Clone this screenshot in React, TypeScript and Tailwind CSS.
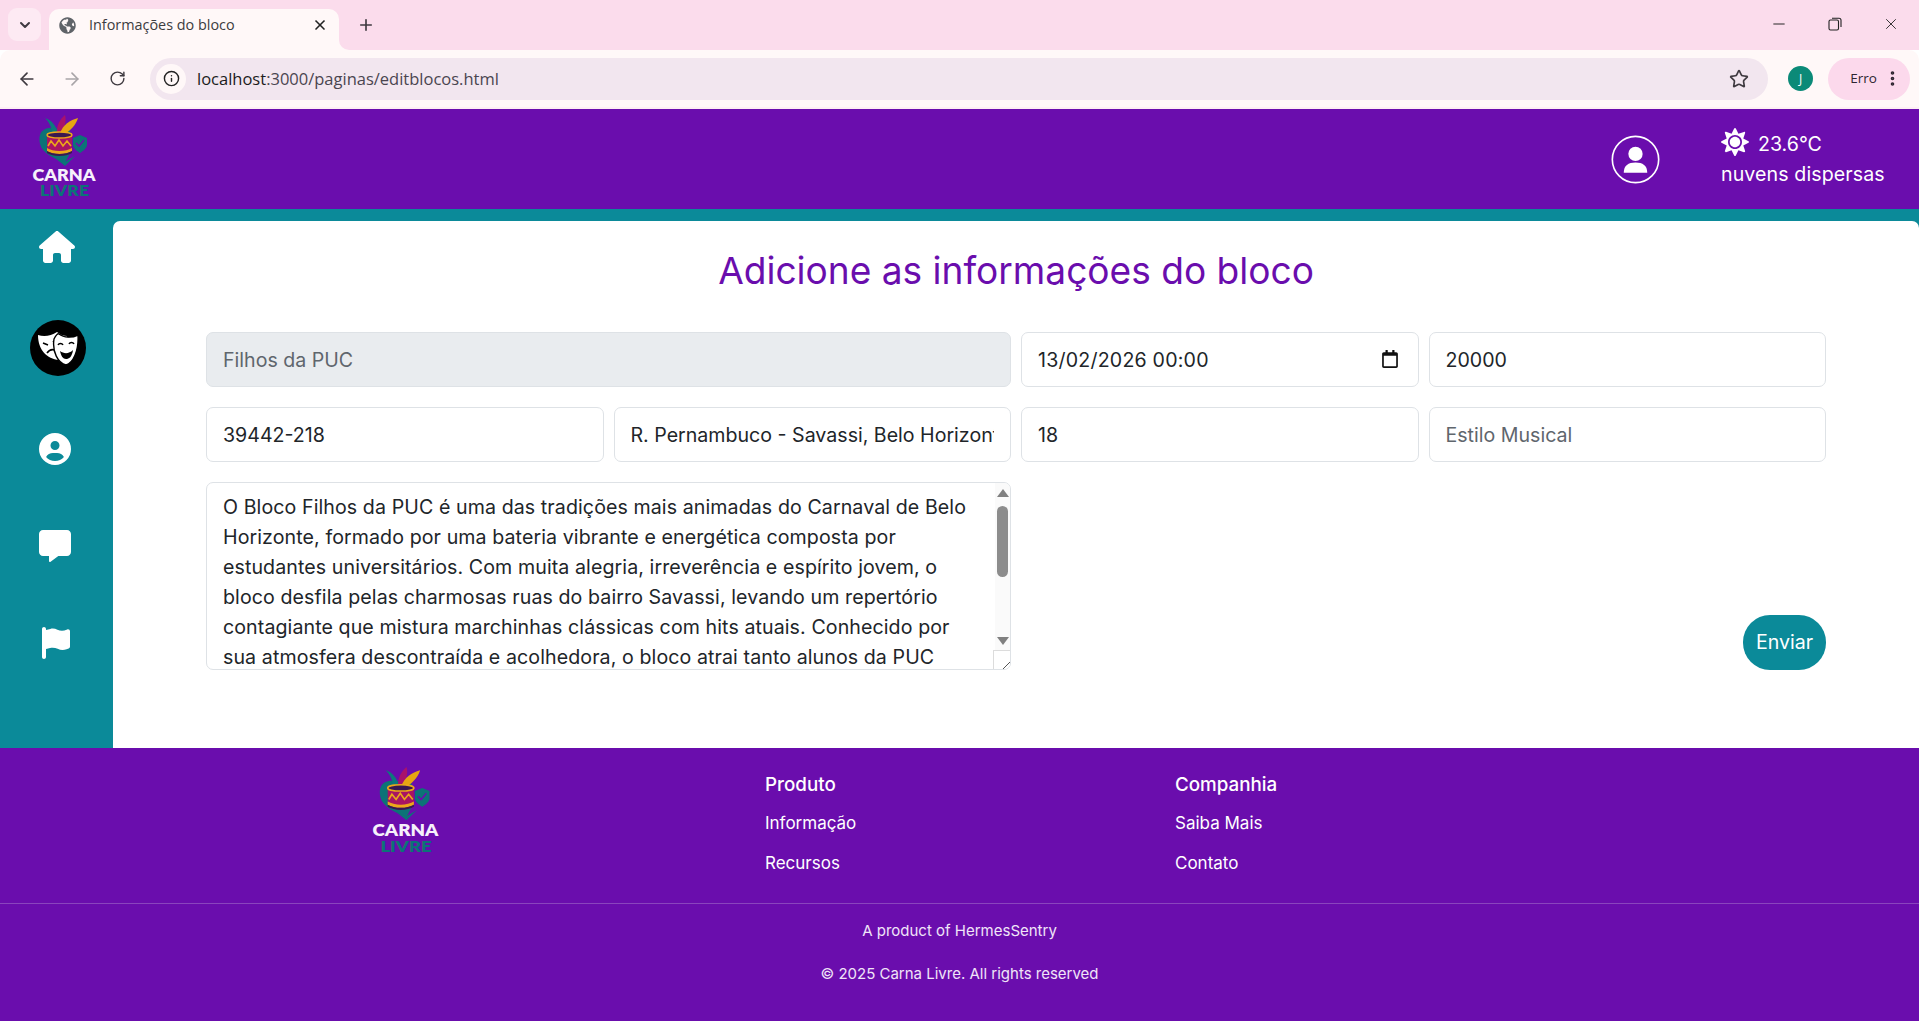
import { ArrowLeft, ArrowRight, ChevronDown, EllipsisVertical, Info, Minus, Plus, RotateCw, Star, X } from "lucide-react";
import { FaGlobeAmericas, FaRegCalendar, FaSun } from "react-icons/fa";
import { FaCircleUser, FaFlag, FaHouse, FaMessage } from "react-icons/fa6";

const description =
  "O Bloco Filhos da PUC é uma das tradições mais animadas do Carnaval de Belo Horizonte, formado por uma bateria vibrante e energética composta por estudantes universitários. Com muita alegria, irreverência e espírito jovem, o bloco desfila pelas charmosas ruas do bairro Savassi, levando um repertório contagiante que mistura marchinhas clássicas com hits atuais. Conhecido por sua atmosfera descontraída e acolhedora, o bloco atrai tanto alunos da PUC";

const inputClass =
  "h-[55px] w-full min-w-0 rounded-[7px] border border-[#dee2e6] px-[16px] text-[19.6px] outline-none placeholder:text-[#5f666d]";

function Logo({ className }: { className: string }) {
  return (
    <svg viewBox="0 0 66 86" className={className}>
      <path d="M9 29 C7 20 10 14 18 13 L38 14 C41 20 41 34 39 38 L34 48 C24 44 11 38 9 29Z" fill="#0c7377" />
      <path d="M14 3 C21 5 25 11 27 18 L21 19 C21 12 18 7 14 3Z" fill="#0c7a7c" />
      <path d="M34 0 C36 6 33 14 29 20 L26 19 C25 11 29 4 34 0Z" fill="#a8126c" />
      <path d="M47 3 C45 10 39 16 32 20 L29 18 C32 10 39 5 47 3Z" fill="#e6a612" />
      <path d="M42 23 L49 20 L56 23 L56 30 C56 33 52 36 49 38 C46 36 42 33 42 30Z" fill="#0c7377" />
      <path d="M45 28 L48 31 L53 25" fill="none" stroke="#6a0dad" strokeWidth="1.6" />
      <path d="M16 20 L16 36 C22 40 35 40 41 36 L41 20Z" fill="#a81463" />
      <ellipse cx="28.5" cy="20" rx="12.5" ry="3" fill="#3a1850" stroke="#eba81a" strokeWidth="1.5" />
      <path d="M16 33 C22 37 35 37 41 33 L41 36 C35 40 22 40 16 36Z" fill="#eba81a" />
      <path d="M16 36 C22 40 35 40 41 36 L41 38 C35 42 22 42 16 38Z" fill="#3a1850" />
      <path d="M17 31 L20 26 L24 31 L28 25 L32 31 L36 26 L40 31" fill="none" stroke="#eba81a" strokeWidth="1.6" />
      <path d="M24 43 L34 51 L44 41 L34 47Z" fill="#0c7377" />
      <text x="33" y="66" textAnchor="middle" fill="#f6f1fb" fontFamily="Lato, sans-serif" fontWeight="800" fontSize="16.5" textLength="63" lengthAdjust="spacingAndGlyphs">CARNA</text>
      <text x="33.5" y="81" textAnchor="middle" fill="#0c7377" fontFamily="Lato, sans-serif" fontWeight="800" fontSize="15" textLength="49" lengthAdjust="spacingAndGlyphs">LIVRE</text>
    </svg>
  );
}

function MasksIcon() {
  return (
    <svg viewBox="0 0 42 36" className="h-[36px] w-[42px]">
      <path d="M1 5 C7 7 14 6 20 2 C24 5 27 6 30 6 L22 30 C10 29 1 20 1 5Z" fill="#fff" />
      <path d="M6 13 L11 15 M16 11 L19 14" stroke="#000" strokeWidth="1.6" />
      <path d="M10 23 C12 20 15 19 18 20" stroke="#000" strokeWidth="1.6" fill="none" />
      <path d="M17 9 C19 5 21 3 22 4 C27 8 35 8 41 5 C42 21 36 33 29 35 C21 33 15 22 17 9Z" fill="#fff" stroke="#000" strokeWidth="1.4" />
      <path d="M21 15 C22 13 25 13 26 15 M32 14 C33 12 36 12 37 14" stroke="#000" strokeWidth="1.5" fill="none" />
      <path d="M23 21 C27 24 32 24 36 20 C35 27 32 29 29 29 C26 29 24 26 23 21Z" fill="#000" />
    </svg>
  );
}

function ProfileIcon() {
  return (
    <svg viewBox="0 0 48 48" className="mr-[61px] ml-auto h-[49px] w-[49px]" fill="#fff">
      <circle cx="24" cy="24" r="22.7" fill="none" stroke="#fff" strokeWidth="1.6" />
      <circle cx="24" cy="18.5" r="7" />
      <path d="M12.5 37 C12.5 30 17 27 24 27 C31 27 35.5 30 35.5 37Z" />
    </svg>
  );
}

function BrowserChrome() {
  return (
    <div className="font-['Open_Sans',sans-serif] text-[#3f3a40]">
      <div className="flex h-[50px] items-end bg-[#fbdcec] pl-[8px]">
        <div className="mb-[9px] flex h-[33px] w-[33px] items-center justify-center rounded-[9px] bg-[#fdeaf3]">
          <ChevronDown size={16} strokeWidth={3} />
        </div>
        <div className="ml-[8px] h-[10px] w-[10px] self-end bg-[#fff8f8]">
          <div className="h-full w-full rounded-br-[10px] bg-[#fbdcec]" />
        </div>
        <div className="-ml-[10px] flex h-[41px] w-[290px] items-center rounded-t-[10px] bg-[#fff8f8] pr-[11px] pb-[9px] pl-[10px]">
          <FaGlobeAmericas size={17} className="text-[#5f6368]" />
          <span className="ml-[13px] flex-1 text-[14.4px] text-[#3c3c40]">Informações do bloco</span>
          <X size={16} strokeWidth={2.5} className="text-[#222]" />
        </div>
        <div className="h-[10px] w-[10px] self-end bg-[#fff8f8]">
          <div className="h-full w-full rounded-bl-[10px] bg-[#fbdcec]" />
        </div>
        <Plus size={18} strokeWidth={2.2} className="mb-[16px] ml-[8px]" />
        <div className="mb-[17px] ml-auto flex items-center gap-[40px] pr-[19px] text-[#222]">
          <Minus size={18} strokeWidth={1.3} />
          <svg width="14" height="14" viewBox="0 0 14 14" fill="none" stroke="#222" strokeWidth="1.1">
            <rect x="1" y="3" width="9.5" height="10" rx="1.5" />
            <path d="M4 1.2 H11 A2 2 0 0 1 13 3.2 V10" />
          </svg>
          <X size={18} strokeWidth={1.2} />
        </div>
      </div>
      <div className="flex h-[57px] items-center rounded-t-[10px] bg-[#fff8f8] pr-[9px] pl-[17px]">
        <ArrowLeft size={20} strokeWidth={2} />
        <ArrowRight size={20} strokeWidth={2} className="ml-[25px] text-[#a9a5a8]" />
        <RotateCw size={17} strokeWidth={2} className="ml-[27px]" />
        <div className="ml-[24px] flex h-[42px] flex-1 items-center rounded-full bg-[#f2e6ef] pr-[19px] pl-[6px]">
          <div className="flex h-[30px] w-[30px] items-center justify-center rounded-full bg-[#fff8f8]">
            <Info size={17} strokeWidth={2} className="text-[#222]" />
          </div>
          <span className="ml-[11px] flex-1 pt-[2px] text-[16.5px] text-[#4a4550]">
            <span className="text-[#1c1c1c]">localhost</span>:3000/paginas/editblocos.html
          </span>
          <Star size={20} strokeWidth={2} />
        </div>
        <div className="ml-[20px] flex h-[25px] w-[25px] items-center justify-center rounded-full bg-[#0b8a78] text-[12px] text-white">J</div>
        <div className="ml-[15px] flex h-[42px] w-[82px] items-center justify-end rounded-full bg-[#fcd9ec] pr-[8px] text-[13.5px] text-[#2e2530]">
          Erro
          <EllipsisVertical size={19} strokeWidth={2.6} className="ml-[6px]" />
        </div>
      </div>
      <div className="h-[2px] bg-[#fdeff4]" />
    </div>
  );
}

function Sidebar() {
  return (
    <aside className="flex w-[113px] shrink-0 flex-col items-center pt-[20px] pr-[3px] text-white">
      <FaHouse size={36} className="ml-[4px]" />
      <div className="mt-[55px] ml-[5px] flex h-[56px] w-[56px] items-center justify-center rounded-full bg-black">
        <MasksIcon />
      </div>
      <FaCircleUser size={32} className="mt-[57px]" />
      <FaMessage size={32} className="mt-[65px]" />
      <FaFlag size={32} className="mt-[65px] ml-[2px]" />
    </aside>
  );
}

function EditForm() {
  return (
    <main className="mt-[12px] flex-1 rounded-t-[7px] bg-white px-[93px] pt-[26px]">
      <h1 className="mb-[38px] text-center text-[37.1px] leading-[47px] font-normal text-[#6a0dad]">
        Adicione as informações do bloco
      </h1>
      <form className="grid grid-cols-4 gap-x-[10px] gap-y-[20px]">
        <input className={`${inputClass} col-span-2 bg-[#e9ecef] text-[#5f666d]`} defaultValue="Filhos da PUC" disabled />
        <div className="relative">
          <input className={`${inputClass} bg-white tracking-[0.2px] text-[#212529]`} defaultValue="13/02/2026 00:00" />
          <FaRegCalendar size={18} className="absolute top-[18px] right-[20px] text-[#111]" />
        </div>
        <input className={`${inputClass} bg-white text-[#212529]`} defaultValue="20000" />
        <input className={`${inputClass} bg-white text-[#212529]`} defaultValue="39442-218" />
        <input className={`${inputClass} bg-white text-[#212529]`} defaultValue="R. Pernambuco - Savassi, Belo Horizonte" />
        <input className={`${inputClass} bg-white text-[#212529]`} defaultValue="18" />
        <input className={`${inputClass} bg-white text-[#212529]`} placeholder="Estilo Musical" />
        <div className="relative col-span-2 h-[188px] overflow-hidden rounded-[7px] border border-[#dee2e6]">
          <textarea
            className="h-full w-full resize-none overflow-hidden pt-[9px] pr-[30px] pl-[16px] text-[19.6px] leading-[30px] tracking-[0.09px] text-[#212529] outline-none"
            defaultValue={description}
          />
          {/* fake scrollbar */}
          <div className="absolute top-0 right-0 flex h-full w-[15px] flex-col items-center bg-[#fafafa]">
            <div className="mt-[6px] h-0 w-0 border-x-[6px] border-b-[8px] border-x-transparent border-b-[#808080]" />
            <div className="mt-[9px] h-[71px] w-[11px] rounded-full bg-[#8c8c8c]" />
            <div className="mt-[60px] h-0 w-0 border-x-[6px] border-t-[8px] border-x-transparent border-t-[#808080]" />
            <div className="mt-auto flex h-[19px] w-[19px] items-end justify-end border-t border-l border-[#dcdcdc] bg-white">
              <svg width="12" height="12" viewBox="0 0 12 12" stroke="#555" strokeWidth="1">
                <path d="M3 12 L12 3 M8 12 L12 8" />
              </svg>
            </div>
          </div>
        </div>
        <div className="col-start-4 flex items-end justify-end">
          <button type="button" className="h-[55px] w-[83px] rounded-[27px] bg-[#0b8a99] text-[19.6px] text-white">
            Enviar
          </button>
        </div>
      </form>
    </main>
  );
}

function Footer() {
  return (
    <footer className="h-full bg-[#6a0dad] text-white">
      <div className="flex h-[156px] border-b border-[#8a44bd] pt-[19px]">
        <div className="ml-[371px] w-[394px]">
          <Logo className="h-[90px] w-[69px]" />
        </div>
        <div className="w-[410px]">
          <h3 className="mt-[7px] text-[18.8px] leading-[22px] font-medium">Produto</h3>
          <p className="mt-[16px] text-[17px] leading-[22px]">Informação</p>
          <p className="mt-[18px] text-[17px] leading-[22px]">Recursos</p>
        </div>
        <div>
          <h3 className="mt-[7px] text-[18.8px] leading-[22px] font-medium">Companhia</h3>
          <p className="mt-[16px] text-[17px] leading-[22px]">Saiba Mais</p>
          <p className="mt-[18px] text-[17px] leading-[22px]">Contato</p>
        </div>
      </div>
      <div className="pt-[17px] text-center text-[15px] leading-[20px] text-[#f0e4f8]">
        <p>A product of HermesSentry</p>
        <p className="mt-[23px]">© 2025 Carna Livre. All rights reserved</p>
      </div>
    </footer>
  );
}

export default function App() {
  return (
    <div className="flex h-[1021px] flex-col overflow-hidden bg-white font-['Inter',sans-serif]">
      <BrowserChrome />
      <header className="flex h-[100px] shrink-0 items-center bg-[#6a0dad] text-white">
        <Logo className="mb-[2px] ml-[31px] h-[86px] w-[66px]" />
        <ProfileIcon />
        <div className="mr-[34px] w-[164px]">
          <div className="flex items-center text-[19.6px] leading-[30px]">
            <FaSun size={28} className="mr-[9px] -mt-[4px]" />
            23.6°C
          </div>
          <div className="text-[19.6px] leading-[30px] tracking-[0.1px]">nuvens dispersas</div>
        </div>
      </header>
      <div className="flex h-[539px] shrink-0 bg-[#0b8a99]">
        <Sidebar />
        <EditForm />
      </div>
      <div className="flex-1">
        <Footer />
      </div>
    </div>
  );
}
